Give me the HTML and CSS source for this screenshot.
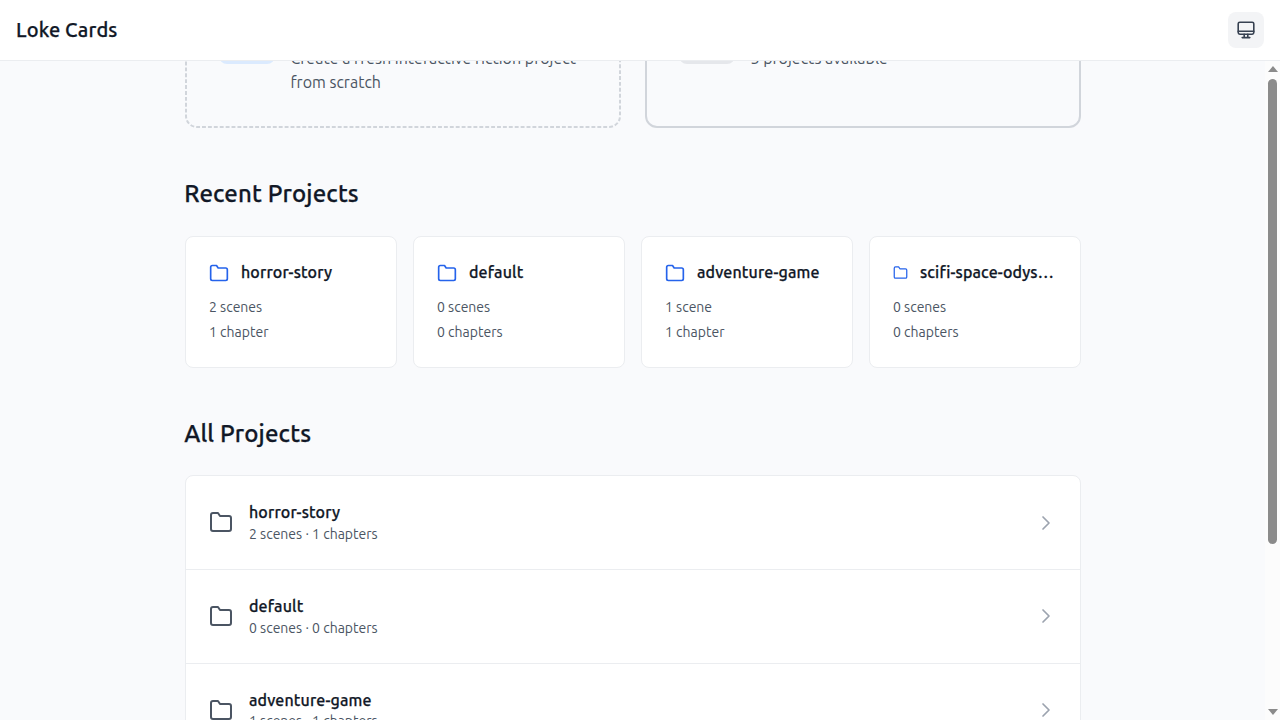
FILE: index.html
```html
<!DOCTYPE html>
<html lang="en">
<head>
<meta charset="utf-8">
<title>Loke Cards</title>
<link rel="stylesheet" href="styles.css">
</head>
<body>
<svg width="0" height="0" class="defs" aria-hidden="true">
  <symbol id="folder" viewBox="0 0 24 24"><path d="M22 19a2 2 0 0 1-2 2H4a2 2 0 0 1-2-2V5a2 2 0 0 1 2-2h5l2 3h9a2 2 0 0 1 2 2z"/></symbol>
  <symbol id="chevron" viewBox="0 0 24 24"><path d="M9 18l6-6-6-6"/></symbol>
</svg>
<header class="topbar">
  <h1 class="brand">Loke Cards</h1>
  <button class="theme" aria-label="Theme">
    <svg width="20" height="20" viewBox="0 0 20 20"><rect x="2.2" y="2.2" width="15.6" height="12" rx="1.6"/><path d="M2.2 11.2h15.6M8.2 14.4v3M11.8 14.4v3M6.2 17.6h7.6"/></svg>
  </button>
</header>
<div class="viewport">
  <main class="page">
    <div class="content">
      <section class="actions">
        <div class="action dashed">
          <svg class="outline" width="436" height="154" viewBox="0 0 436 154"><rect x="1" y="1" width="434" height="152" rx="11"/></svg>
          <div class="tile blue"></div>
          <p class="action-text">Create a fresh interactive fiction project<br>from scratch</p>
        </div>
        <div class="action">
          <div class="tile gray"></div>
          <p class="action-text">5 projects available</p>
        </div>
      </section>
      <h2 class="heading">Recent Projects</h2>
      <section class="cards">
        <article class="card"><div class="card-head"><svg class="folder"><use href="#folder"/></svg><h3 class="name">horror-story</h3></div><p class="stat">2 scenes</p><p class="stat">1 chapter</p></article>
        <article class="card"><div class="card-head"><svg class="folder"><use href="#folder"/></svg><h3 class="name">default</h3></div><p class="stat">0 scenes</p><p class="stat">0 chapters</p></article>
        <article class="card"><div class="card-head"><svg class="folder"><use href="#folder"/></svg><h3 class="name">adventure-game</h3></div><p class="stat">1 scene</p><p class="stat">1 chapter</p></article>
        <article class="card"><div class="card-head"><svg class="folder small"><use href="#folder"/></svg><h3 class="name">scifi-space-odys…</h3></div><p class="stat">0 scenes</p><p class="stat">0 chapters</p></article>
      </section>
      <h2 class="heading">All Projects</h2>
      <section class="list">
        <div class="row"><svg class="row-icon"><use href="#folder"/></svg><div class="row-body"><h3 class="name">horror-story</h3><p class="stat">2 scenes · 1 chapters</p></div><svg class="chevron"><use href="#chevron"/></svg></div>
        <div class="row"><svg class="row-icon"><use href="#folder"/></svg><div class="row-body"><h3 class="name">default</h3><p class="stat">0 scenes · 0 chapters</p></div><svg class="chevron"><use href="#chevron"/></svg></div>
        <div class="row"><svg class="row-icon"><use href="#folder"/></svg><div class="row-body"><h3 class="name">adventure-game</h3><p class="stat">1 scenes · 1 chapters</p></div><svg class="chevron"><use href="#chevron"/></svg></div>
      </section>
    </div>
  </main>
  <div class="scrollbar">
    <svg class="arrow" width="10" height="6" viewBox="0 0 10 6"><path d="M5 0l5 6H0z"/></svg>
    <div class="thumb"></div>
    <svg class="arrow down" width="10" height="6" viewBox="0 0 10 6"><path d="M0 0h10L5 6z"/></svg>
  </div>
</div>
</body>
</html>
```
FILE: styles.css
```css
* { box-sizing: border-box; margin: 0; padding: 0; }
body {
  height: 720px;
  overflow: hidden;
  display: flex;
  flex-direction: column;
  background: #f9fafb;
  color: #111827;
  font-family: Ubuntu, "Noto Sans", "Open Sans", sans-serif;
  font-size: 16px;
  line-height: 1.5;
}
.defs { display: none; }
svg { fill: none; stroke: currentColor; stroke-width: 2; stroke-linecap: round; stroke-linejoin: round; flex: none; }
h1, h2, h3 { font-weight: 500; letter-spacing: 0.14px; -webkit-text-stroke: 0.25px currentColor; white-space: nowrap; }
.topbar {
  height: 61px;
  flex: none;
  display: flex;
  align-items: center;
  justify-content: space-between;
  padding: 0 16px;
  background: #fff;
  border-bottom: 1px solid #ebedf0;
  position: relative;
  z-index: 1;
}
.brand { font-size: 20px; line-height: 28px; }
.theme {
  width: 36px;
  height: 36px;
  display: flex;
  align-items: center;
  justify-content: center;
  border: 0;
  border-radius: 8px;
  background: #f3f4f6;
  color: #374151;
}
.theme svg { stroke-width: 1.6; }
.viewport { flex: 1; min-height: 0; display: flex; overflow: hidden; }
.page { flex: 1; height: 659px; overflow: hidden; background: #f9fafc; }
.content { width: 896px; margin: -87px auto 0; }
.actions { display: grid; grid-template-columns: 1fr 1fr; gap: 24px; margin-bottom: 48px; }
.action {
  height: 154px;
  display: flex;
  align-items: flex-start;
  gap: 16px;
  padding: 32px;
  border: 2px solid #d1d5db;
  border-radius: 12px;
  position: relative;
}
.dashed { border-color: transparent; }
.outline {
  position: absolute;
  left: -2px;
  top: -2px;
  color: #d1d5db;
  stroke-linecap: butt;
  stroke-dasharray: 3.9 2;
}
.tile { width: 56px; height: 56px; border-radius: 8px; flex: none; }
.blue { background: #dbeafe; }
.gray { background: #e5e7eb; }
.action-text { margin: 38px 0 0; color: #4b5563; line-height: 24px; white-space: nowrap; }
.heading { margin: 0 0 24px -0.3px; font-size: 24px; line-height: 36px; }
.cards { display: grid; grid-template-columns: repeat(4, 1fr); gap: 16px; margin-bottom: 48px; }
.card { height: 132px; padding: 23px 23.5px; background: #fff; border: 1px solid #ebedf0; border-radius: 8px; }
.card-head { display: flex; align-items: center; gap: 12px; margin-bottom: 13px; }
.folder { width: 20px; height: 20px; color: #2563eb; margin-top: 1px; }
.small { width: 15px; height: 15px; }
.name { font-size: 16px; line-height: 24px; }
.stat { font-size: 14px; line-height: 21px; color: #4b5563; }
.stat + .stat { margin-top: 4px; }
.list { margin-top: -0.6px; background: #fff; border: 1px solid #ebedf0; border-radius: 8px; }
.row { height: 93.7px; display: flex; align-items: center; gap: 16px; padding: 0 21.5px 0 23.5px; border-bottom: 1px solid #ebedf0; }
.row-icon { width: 24px; height: 24px; color: #4b5563; margin-top: -1px; }
.row-body { flex: 1; }
.row-body .stat { margin-top: -0.4px; }
.chevron { width: 24px; height: 24px; color: #9ca3af; stroke-width: 1.7; }
.row .name { margin-top: -0.4px; }
.scrollbar {
  width: 15px;
  display: flex;
  flex-direction: column;
  align-items: center;
  padding: 5px 0 5px;
  background: #fcfcfc;
}
.arrow { fill: #8b8b8b; stroke: none; }
.down { margin-top: auto; }
.thumb { width: 9px; height: 465px; margin-top: 7px; border-radius: 5px; background: #8b8b8b; }
```
